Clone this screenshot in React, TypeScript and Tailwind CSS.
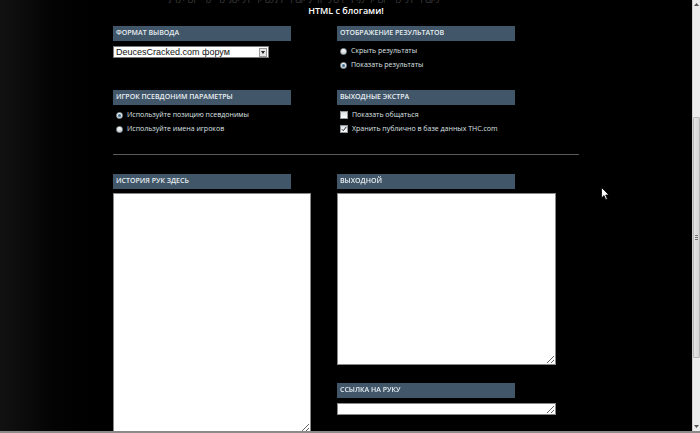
import type { ReactNode } from 'react';

const font = { fontFamily: '"Open Sans", "DejaVu Sans", sans-serif' };

function Header({ children }: { children: ReactNode }) {
  return (
    <div className="flex h-[15px] w-[178px] items-center bg-[#415668] pl-[3px] text-[7px] font-semibold uppercase text-[#e8eef2]">
      {children}
    </div>
  );
}

function Radio({ checked, label }: { checked?: boolean; label: string }) {
  return (
    <div className="flex h-[14px] items-center gap-[4px] pl-[3px]">
      <span className="flex h-[7px] w-[7px] items-center justify-center rounded-full border border-[#9aa4ac] bg-gradient-to-b from-white to-[#c9ced2]">
        {checked && <span className="h-[3px] w-[3px] rounded-full bg-[#3f6d92]" />}
      </span>
      <span className="text-[7px] text-[#dfe3e6]">{label}</span>
    </div>
  );
}

function Checkbox({ checked, label }: { checked?: boolean; label: string }) {
  return (
    <div className="flex h-[14px] items-center gap-[4px] pl-[3px]">
      <span className="flex h-[8px] w-[8px] items-center justify-center border border-[#8e969c] bg-gradient-to-b from-[#dcdfe2] to-white">
        {checked && (
          <svg width="6" height="6" viewBox="0 0 6 6">
            <path d="M0.8 3.2 L2.3 4.8 L5.3 0.8" fill="none" stroke="#333" strokeWidth="1" />
          </svg>
        )}
      </span>
      <span className="text-[7px] text-[#dfe3e6]">{label}</span>
    </div>
  );
}

export default function App() {
  return (
    <div className="relative flex h-[433px] w-[700px] flex-col overflow-hidden bg-black" style={font}>
      <div className="flex min-h-0 flex-1">
        {/* Page */}
        <div className="relative flex-1 overflow-hidden bg-[linear-gradient(to_right,#121212,#040404_50px,#000_90px)]">
          {/* tail of the previous line, scrolled off the top */}
          <div className="h-[3px] overflow-hidden">
            <div className="-mt-[10px] flex h-[13px] items-start whitespace-nowrap pl-[125px] text-[10px] leading-[13px] text-[#3a3a3a]">
              <span className="mr-[4px] inline-block h-[13px] w-[40px] bg-black" />
              <span>jqy, gp qy  qy jg, ypq, gyj  pq gj, yqp yg pq ,jyq, gp qy ypq gj,y</span>
            </div>
          </div>
          <div className="mt-[1px] text-center text-[9px] font-semibold leading-[14px] text-white">HTML с блогами!</div>

          <div className="mt-[8px] flex pl-[113px]">
            {/* Left column */}
            <div className="w-[224px]">
              <Header>Формат вывода</Header>
              <div className="mt-[5px] flex h-[12px] w-[156px] items-center border border-[#7a7a7a] bg-white">
                <span className="flex-1 pl-[2px] text-[9px] leading-none text-[#111]" style={{ fontFamily: '"Liberation Sans", Arial, sans-serif' }}>
                  DeucesCracked.com форум
                </span>
                <span className="mr-[1px] flex h-[9px] w-[8px] items-center justify-center border border-[#999] bg-[#e6e6e6]">
                  <svg width="4" height="3" viewBox="0 0 4 3">
                    <path d="M0 0 H4 L2 3 Z" fill="#222" />
                  </svg>
                </span>
              </div>

              <div className="mt-[32px]">
                <Header>Игрок псевдоним параметры</Header>
                <div className="mt-[3px]">
                  <Radio checked label="Используйте позицию псевдонимы" />
                  <Radio label="Используйте имена игроков" />
                </div>
              </div>
            </div>

            {/* Right column */}
            <div className="w-[243px]">
              <Header>Отображение результатов</Header>
              <div className="mt-[3px]">
                <Radio label="Скрыть результаты" />
                <Radio checked label="Показать результаты" />
              </div>

              <div className="mt-[18px]">
                <Header>Выходные экстра</Header>
                <div className="mt-[3px]">
                  <Checkbox label="Показать общаться" />
                  <Checkbox checked label="Хранить публично в базе данных THC.com" />
                </div>
              </div>
            </div>
          </div>

          <div className="ml-[113px] mt-[18px] h-px w-[466px] bg-[#5a5a5a]" />

          <div className="mt-[19px] flex pl-[113px]">
            <div className="w-[224px]">
              <Header>История рук здесь</Header>
              <textarea className="mt-[4px] block h-[240px] w-[198px] resize border border-[#888] bg-white" />
            </div>
            <div className="w-[243px]">
              <Header>Выходной</Header>
              <textarea className="mt-[4px] block h-[172px] w-[219px] resize border border-[#888] bg-white" />
              <div className="mt-[18px]">
                <Header>Ссылка на руку</Header>
              </div>
              <textarea className="mt-[5px] block h-[12px] w-[219px] resize border border-[#888] bg-white" />
            </div>
          </div>

          {/* Mouse pointer */}
          <svg className="absolute left-[601px] top-[187px]" width="9" height="14" viewBox="0 0 9 14">
            <path d="M0.5 0.5 V11 L3 8.6 L4.8 12.8 L6.4 12 L4.7 8 H8 Z" fill="#fff" stroke="#000" strokeWidth="0.8" />
          </svg>
        </div>

        {/* Scrollbar */}
        <div className="flex w-[8px] flex-col border-l border-[#d0d0d0] bg-[#ececec]">
          <div className="flex h-[9px] items-center justify-center">
            <svg width="5" height="3" viewBox="0 0 5 3"><path d="M0 3 L2.5 0 L5 3 Z" fill="#555" /></svg>
          </div>
          <div className="h-[108px]" />
          <div className="flex h-[241px] items-center justify-center rounded-[1px] border border-[#b8b8b8] bg-gradient-to-r from-[#e4e4e4] to-[#d6d6d6]">
            <div className="flex flex-col gap-[1px]">
              <div className="h-px w-[3px] bg-[#777]" />
              <div className="h-px w-[3px] bg-[#777]" />
              <div className="h-px w-[3px] bg-[#777]" />
            </div>
          </div>
          <div className="flex-1" />
          <div className="flex h-[9px] items-center justify-center">
            <svg width="5" height="3" viewBox="0 0 5 3"><path d="M0 0 L2.5 3 L5 0 Z" fill="#555" /></svg>
          </div>
        </div>
      </div>
      <div className="h-[2px] bg-[#8a8a8a]" />
    </div>
  );
}
